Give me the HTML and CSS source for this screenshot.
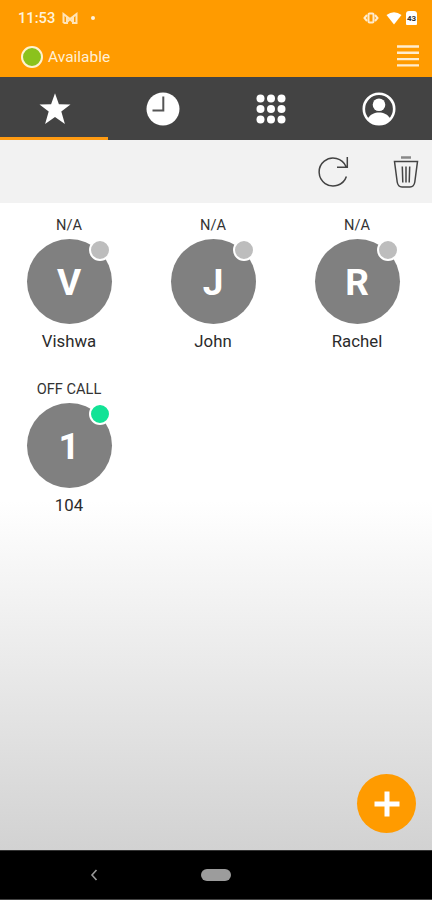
FILE: index.html
```
<!DOCTYPE html>
<html lang="en">
<head>
    <meta charset="UTF-8">
    <title>Favorites</title>
    <link rel="stylesheet" href="styles.css">
</head>
<body>
<div class="phone">
    <div class="status-bar">
        <span class="time">11:53</span>
        <svg class="mail" width="16" height="12" viewBox="0 0 16 12"><path d="M1.500 11V2L8 7l6.500-5v9h-3.500V5M1.500 11H5V5M5 10l3-3 3 3"/></svg>
        <span class="dot"></span>
        <svg class="vibrate" width="16" height="14" viewBox="0 0 16 14"><rect x="5.500" y="2.500" width="5" height="9" rx="1"/><path d="M4 4L1.500 7 4 10M12 4l2.500 3L12 10"/></svg>
        <svg class="wifi" width="16" height="13" viewBox="0 0 16 13"><path d="M.5 3Q8-2.500 15.500 3L8 12.500z"/></svg>
        <span class="battery">43</span>
    </div>
    <div class="header">
        <span class="state"></span>
        <span class="state-text">Available</span>
        <svg class="menu" width="22" height="22" viewBox="0 0 22 22"><path d="M0 1.500h22M0 7.800h22M0 14.100h22M0 20.400h22"/></svg>
    </div>
    <div class="tabs">
        <div class="tab active">
            <svg width="34" height="34" viewBox="0 0 34 34"><path d="M17 1.300l3.900 10.900 11.600.3-9.200 7.100 3.600 12.400L17 25l-9.900 7 3.600-12.400-9.200-7.100 11.600-.3z"/></svg>
        </div>
        <div class="tab">
            <svg width="34" height="34" viewBox="0 0 34 34"><circle cx="17" cy="17" r="16.500"/><path class="hands" d="M17.300 4.500v14H6.500"/></svg>
        </div>
        <div class="tab">
            <svg width="34" height="34" viewBox="0 0 34 34">
                <circle cx="6.500" cy="6.500" r="4"/><circle cx="17" cy="6.500" r="4"/><circle cx="27.500" cy="6.500" r="4"/>
                <circle cx="6.500" cy="17" r="4"/><circle cx="17" cy="17" r="4"/><circle cx="27.500" cy="17" r="4"/>
                <circle cx="6.500" cy="27.500" r="4"/><circle cx="17" cy="27.500" r="4"/><circle cx="27.500" cy="27.500" r="4"/>
            </svg>
        </div>
        <div class="tab">
            <svg width="34" height="34" viewBox="0 0 34 34"><circle class="ring" cx="17" cy="17" r="15.200"/><circle cx="17" cy="12.800" r="6.300"/><path d="M5.500 27.500C8 22 13 20.500 17 20.500S26 22 28.500 27.500C25 31.500 21 33 17 33S9 31.500 5.500 27.500z"/></svg>
        </div>
    </div>
    <div class="toolbar">
        <svg class="refresh" width="32" height="32" viewBox="0 0 32 32"><path d="M28.400 20.500A14 14 0 1 1 28 10.500M29.300 1v10.300H19"/></svg>
        <svg class="trash" width="26" height="34" viewBox="0 0 26 34"><path class="lid" d="M8 2.500h10"/><path d="M1.500 6.500h23L21.800 27Q21 32 17 32H9Q5 32 4.200 27zM9.300 11.500l.5 16M13 11.500v16M16.700 11.500l-.5 16"/></svg>
    </div>
    <div class="contacts">
        <div class="contact">
            <div class="call">N/A</div>
            <div class="avatar">V<span class="badge"></span></div>
            <div class="name">Vishwa</div>
        </div>
        <div class="contact">
            <div class="call">N/A</div>
            <div class="avatar">J<span class="badge"></span></div>
            <div class="name">John</div>
        </div>
        <div class="contact">
            <div class="call">N/A</div>
            <div class="avatar">R<span class="badge"></span></div>
            <div class="name">Rachel</div>
        </div>
        <div class="contact">
            <div class="call">OFF CALL</div>
            <div class="avatar">1<span class="badge online"></span></div>
            <div class="name">104</div>
        </div>
        <div class="add">
            <svg width="26" height="26" viewBox="0 0 26 26"><path d="M13 0.500v25M0.500 13h25"/></svg>
        </div>
    </div>
    <div class="nav-bar">
        <svg class="back" width="8" height="12" viewBox="0 0 8 12"><path d="M6.500 1L2 6l4.500 5"/></svg>
        <span class="home"></span>
    </div>
</div>
</body>
</html>
```
FILE: styles.css
```
*{
    box-sizing: border-box;
}
body{
    margin: 0;
    font-family: Roboto, "Liberation Sans", sans-serif;
}
.phone{
    width: 432px;
    height: 900px;
    display: flex;
    flex-direction: column;
    overflow: hidden;
}
svg{
    display: block;
    flex: none;
}

/* status bar */
.status-bar{
    height: 36px;
    padding: 0 15px 0 18px;
    display: flex;
    align-items: center;
    background: #ff9b00;
    color: #fff3dc;
}
.time{
    width: 38px;
    font-size: 14.7px;
    font-weight: 500;
    line-height: 36px;
}
.mail{
    margin-left: 6px;
    fill: none;
    stroke: #ffe4b8;
    stroke-width: 2;
}
.dot{
    width: 4px;
    height: 4px;
    margin-left: 13px;
    border-radius: 50%;
    background: #fff3dc;
}
.vibrate{
    margin-left: auto;
    fill: none;
    stroke: #ffebcc;
    stroke-width: 2;
}
.wifi{
    margin-left: 7px;
    fill: #fff;
}
.battery{
    width: 11px;
    height: 14px;
    margin-left: 4px;
    border-radius: 3px 3px 1px 1px;
    background: #fff;
    color: #333;
    font-size: 8px;
    font-weight: bold;
    line-height: 15px;
    text-align: center;
}

/* header */
.header{
    height: 41px;
    padding: 0 13px 0 21px;
    display: flex;
    align-items: center;
    background: #ff9b00;
}
.state{
    width: 22px;
    height: 22px;
    border: 2px solid #fff3d0;
    border-radius: 50%;
    background: #8bc21c;
}
.state-text{
    margin-left: 5px;
    font-size: 15.500px;
    line-height: 22px;
    color: #fff0d6;
}
.menu{
    margin-left: auto;
    margin-top: -2px;
    stroke: #ffedcf;
    stroke-width: 2.4;
}

/* tabs */
.tabs{
    height: 63px;
    display: flex;
    background: #434343;
}
.tab{
    flex: 1;
    display: flex;
    justify-content: center;
    padding: 15px 0 0 1px;
    border-bottom: 3px solid #434343;
}
.tab.active{
    border-bottom-color: #ff9b12;
}
.tab svg{
    fill: #fff;
}
.tab .hands{
    fill: none;
    stroke: #555;
    stroke-width: 2;
}
.tab .ring{
    fill: none;
    stroke: #fff;
    stroke-width: 2.6;
}

/* toolbar */
.toolbar{
    height: 63px;
    padding-right: 13px;
    display: flex;
    justify-content: flex-end;
    align-items: center;
    gap: 43px;
    background: #f2f2f2;
}
.toolbar svg{
    fill: none;
    stroke: #444;
    stroke-width: 1.5;
}
.toolbar .lid{
    stroke: #888;
    stroke-width: 2.5;
}

/* contacts */
.contacts{
    position: relative;
    height: 647px;
    padding: 12px 3px 0 0;
    display: grid;
    grid-template-columns: repeat(3, 144px);
    grid-auto-rows: 164px;
    margin-left: -3px;
    background: linear-gradient(#fff 46%, #d2d2d2);
}
.contact{
    display: flex;
    flex-direction: column;
    align-items: center;
}
.call{
    height: 24px;
    font-size: 14.6px;
    line-height: 20px;
    color: #333;
}
.avatar{
    position: relative;
    width: 85px;
    height: 85px;
    border-radius: 50%;
    background: #808080;
    color: #fff;
    font-size: 37px;
    font-weight: bold;
    line-height: 88px;
    text-align: center;
}
.badge{
    position: absolute;
    top: 0;
    right: 1px;
    width: 22px;
    height: 22px;
    border: 2px solid #fff;
    border-radius: 50%;
    background: #bdbdbd;
}
.badge.online{
    background: #12e396;
}
.name{
    margin-top: 6px;
    font-size: 16.800px;
    line-height: 22px;
    color: #2b2b2b;
}
.add{
    position: absolute;
    right: 16px;
    bottom: 17px;
    width: 59px;
    height: 59px;
    display: flex;
    align-items: center;
    justify-content: center;
    border-radius: 50%;
    background: #ff9b00;
}
.add svg{
    stroke: #fff;
    stroke-width: 5;
}

/* navigation bar */
.nav-bar{
    height: 50px;
    padding-left: 90px;
    display: flex;
    align-items: center;
    background: #000;
    border-top: 1px solid #333;
    border-bottom: 1px solid #444;
}
.back{
    fill: none;
    stroke: #999;
    stroke-width: 1.6;
}
.home{
    width: 30px;
    height: 12px;
    margin-left: 103px;
    border-radius: 6px;
    background: #9c9c9c;
}
```
